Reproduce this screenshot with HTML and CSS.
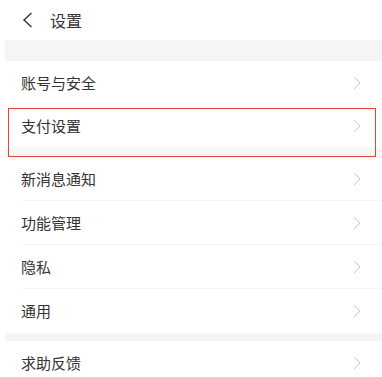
FILE: index.html
```html
<!DOCTYPE html>
<html lang="zh">
<head>
<meta charset="utf-8">
<link rel="stylesheet" href="styles.css">
</head>
<body>
<div class="page">
  <header class="topbar">
    <svg class="back" width="11" height="16" viewBox="0 0 11 16"><path d="M9.5 1 L2 8 L9.5 15" fill="none" stroke="#333" stroke-width="1.4"/></svg>
    <span class="title">设置</span>
  </header>
  <div class="band band-top"></div>
  <div class="section first">
    <div class="row"><span class="label">账号与安全</span><svg class="chev" width="8" height="14" viewBox="0 0 8 14"><path d="M1 1 L7 7 L1 13" fill="none" stroke="#c8c8c8" stroke-width="1"/></svg></div>
    <div class="row pay"><span class="label">支付设置</span><svg class="chev" width="8" height="14" viewBox="0 0 8 14"><path d="M1 1 L7 7 L1 13" fill="none" stroke="#c8c8c8" stroke-width="1"/></svg></div>
    <div class="highlight"></div>
  </div>
  <div class="band band-small"></div>
  <div class="section">
    <div class="row line"><span class="label">新消息通知</span><svg class="chev" width="8" height="14" viewBox="0 0 8 14"><path d="M1 1 L7 7 L1 13" fill="none" stroke="#c8c8c8" stroke-width="1"/></svg></div>
    <div class="row line"><span class="label">功能管理</span><svg class="chev" width="8" height="14" viewBox="0 0 8 14"><path d="M1 1 L7 7 L1 13" fill="none" stroke="#c8c8c8" stroke-width="1"/></svg></div>
    <div class="row line"><span class="label">隐私</span><svg class="chev" width="8" height="14" viewBox="0 0 8 14"><path d="M1 1 L7 7 L1 13" fill="none" stroke="#c8c8c8" stroke-width="1"/></svg></div>
    <div class="row"><span class="label">通用</span><svg class="chev" width="8" height="14" viewBox="0 0 8 14"><path d="M1 1 L7 7 L1 13" fill="none" stroke="#c8c8c8" stroke-width="1"/></svg></div>
  </div>
  <div class="band band-bottom"></div>
  <div class="section">
    <div class="row"><span class="label">求助反馈</span><svg class="chev" width="8" height="14" viewBox="0 0 8 14"><path d="M1 1 L7 7 L1 13" fill="none" stroke="#c8c8c8" stroke-width="1"/></svg></div>
  </div>
</div>
</body>
</html>
```

FILE: styles.css
```css
html, body {
  margin: 0;
  padding: 0;
  background: #ffffff;
}
body {
  font-family: "Noto Sans CJK SC", "Noto Sans", sans-serif;
  color: #333333;
  overflow: hidden;
}
.page {
  width: 382px;
}
.topbar {
  height: 40px;
  display: flex;
  align-items: center;
  padding-left: 22px;
  gap: 17px;
  box-sizing: border-box;
}
.back {
  display: block;
}
.title {
  font-size: 16px;
  line-height: 20px;
  color: #333333;
}
.band {
  margin-left: 5px;
  background: #f5f5f5;
}
.band-top {
  height: 21px;
}
.band-small {
  height: 10px;
  background: #f7f7f7;
}
.band-bottom {
  height: 8px;
}
.section {
  position: relative;
}
.row {
  height: 44px;
  display: flex;
  align-items: center;
  justify-content: space-between;
  padding: 0 21px 0 21px;
  position: relative;
}
.row.pay {
  height: 42px;
}
.row.line::after {
  content: "";
  position: absolute;
  left: 22px;
  right: 0;
  bottom: 0;
  height: 1px;
  background: #f3f3f3;
}
.label {
  font-size: 15px;
  line-height: 20px;
  color: #333333;
}
.chev {
  display: block;
}
.highlight {
  position: absolute;
  left: 8px;
  top: 47px;
  width: 368px;
  height: 49px;
  border: 1px solid #e8433b;
  box-sizing: border-box;
  pointer-events: none;
  z-index: 2;
}
```
